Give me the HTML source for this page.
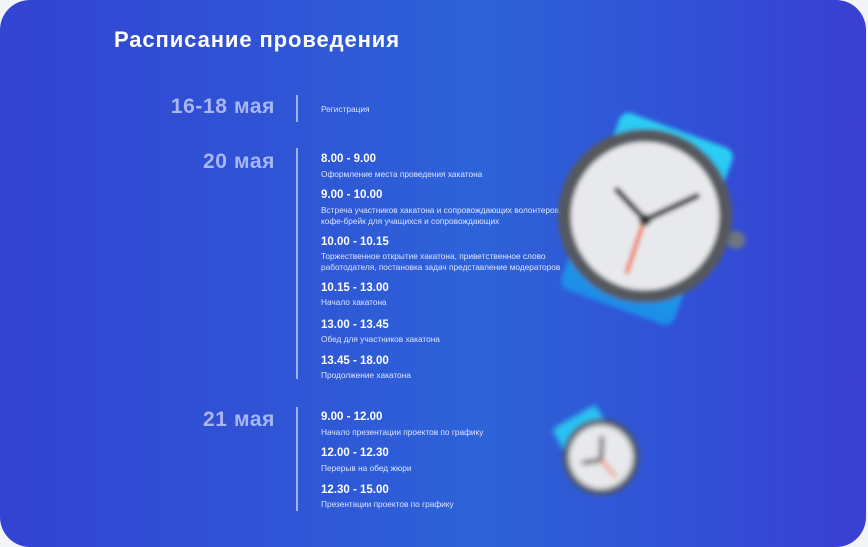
<!DOCTYPE html>
<html><head><meta charset="utf-8"><style>
html,body{margin:0;padding:0;background:#f3f4f8;}
body{width:868px;height:547px;position:relative;overflow:hidden;font-family:"Liberation Sans","DejaVu Sans",sans-serif;}
.card{position:absolute;left:0;top:0;width:866px;height:547px;border-radius:30px;overflow:hidden;
background:linear-gradient(90deg,#3343d2 0%,#2f56d6 35%,#2e63d8 55%,#3150d6 80%,#3a3fd2 100%);}
h1{position:absolute;left:114px;top:27px;margin:0;font-size:22px;font-weight:bold;color:#fff;letter-spacing:0.9px;}
.d{position:absolute;right:591px;font-size:21px;font-weight:bold;color:#a8b6f2;letter-spacing:0.6px;}
.l{position:absolute;left:296px;width:2px;background:#9fb3f2;}
.tm{position:absolute;left:321px;font-size:11.5px;font-weight:bold;color:#fff;}
.ds{position:absolute;left:321px;font-size:8.3px;color:#dce4ff;line-height:10.5px;white-space:nowrap;}
</style></head><body><div class="card">
<h1>Расписание проведения</h1>
<div class="d" style="top:95px">16-18 мая</div>
<div class="l" style="top:95px;height:27px"></div>
<div class="ds" style="top:104px">Регистрация</div>

<div class="d" style="top:150px">20 мая</div>
<div class="l" style="top:148px;height:231px"></div>
<div class="tm" style="top:153px">8.00 - 9.00</div>
<div class="ds" style="top:169px">Оформление места проведения хакатона</div>
<div class="tm" style="top:189px">9.00 - 10.00</div>
<div class="ds" style="top:205px">Встреча участников хакатона и сопровождающих волонтеров,<br>кофе-брейк для учащихся и сопровождающих</div>
<div class="tm" style="top:236px">10.00 - 10.15</div>
<div class="ds" style="top:251px">Торжественное открытие хакатона, приветственное слово<br>работодателя, постановка задач представление модераторов</div>
<div class="tm" style="top:282px">10.15 - 13.00</div>
<div class="ds" style="top:297px">Начало хакатона</div>
<div class="tm" style="top:319px">13.00 - 13.45</div>
<div class="ds" style="top:334px">Обед для участников хакатона</div>
<div class="tm" style="top:355px">13.45 - 18.00</div>
<div class="ds" style="top:370px">Продолжение хакатона</div>

<div class="d" style="top:408px">21 мая</div>
<div class="l" style="top:407px;height:104px"></div>
<div class="tm" style="top:411px">9.00 - 12.00</div>
<div class="ds" style="top:427px">Начало презентации проектов по графику</div>
<div class="tm" style="top:447px">12.00 - 12.30</div>
<div class="ds" style="top:463px">Перерыв на обед жюри</div>
<div class="tm" style="top:484px">12.30 - 15.00</div>
<div class="ds" style="top:499px">Презентации проектов по графику</div>

<svg style="position:absolute;left:0;top:0" width="866" height="547">
<defs>
<filter id="b" x="-30%" y="-30%" width="160%" height="160%"><feGaussianBlur stdDeviation="2.5"/></filter>
<filter id="b2" x="-30%" y="-30%" width="160%" height="160%"><feGaussianBlur stdDeviation="3"/></filter>
<linearGradient id="sq" x1="0" y1="0" x2="0" y2="1"><stop offset="0" stop-color="#2ad0f5"/><stop offset="1" stop-color="#1a8ce8"/></linearGradient>
</defs>
<g filter="url(#b)">
<rect x="587" y="125" width="120" height="188" rx="10" fill="url(#sq)" transform="rotate(20 647 219)"/>
<circle cx="736" cy="240" r="9" fill="#6e7580"/>
<circle cx="645" cy="216" r="87" fill="#55585f"/>
<circle cx="645" cy="216" r="74" fill="#e8e9ec"/>
<line x1="645" y1="220" x2="617" y2="190" stroke="#3a3d42" stroke-width="6" stroke-linecap="round"/>
<line x1="645" y1="220" x2="697" y2="196" stroke="#3a3d42" stroke-width="6" stroke-linecap="round"/>
<line x1="643" y1="224" x2="627" y2="272" stroke="#f05a28" stroke-width="4" stroke-linecap="round"/>
<circle cx="645" cy="220" r="6" fill="#2e3035"/>
</g>
<g filter="url(#b2)">
<rect x="556" y="415" width="50" height="30" rx="4" fill="#2bc3f3" transform="rotate(-30 581 430)"/>
<circle cx="601" cy="457" r="38" fill="#50545c"/>
<circle cx="601" cy="457" r="32" fill="#e8e9ec"/>
<line x1="601" y1="460" x2="602" y2="436" stroke="#35383d" stroke-width="4"/>
<line x1="601" y1="460" x2="582" y2="463" stroke="#35383d" stroke-width="4"/>
<line x1="601" y1="460" x2="616" y2="477" stroke="#f07a5a" stroke-width="3"/>
</g>
</svg>
</div></body></html>
